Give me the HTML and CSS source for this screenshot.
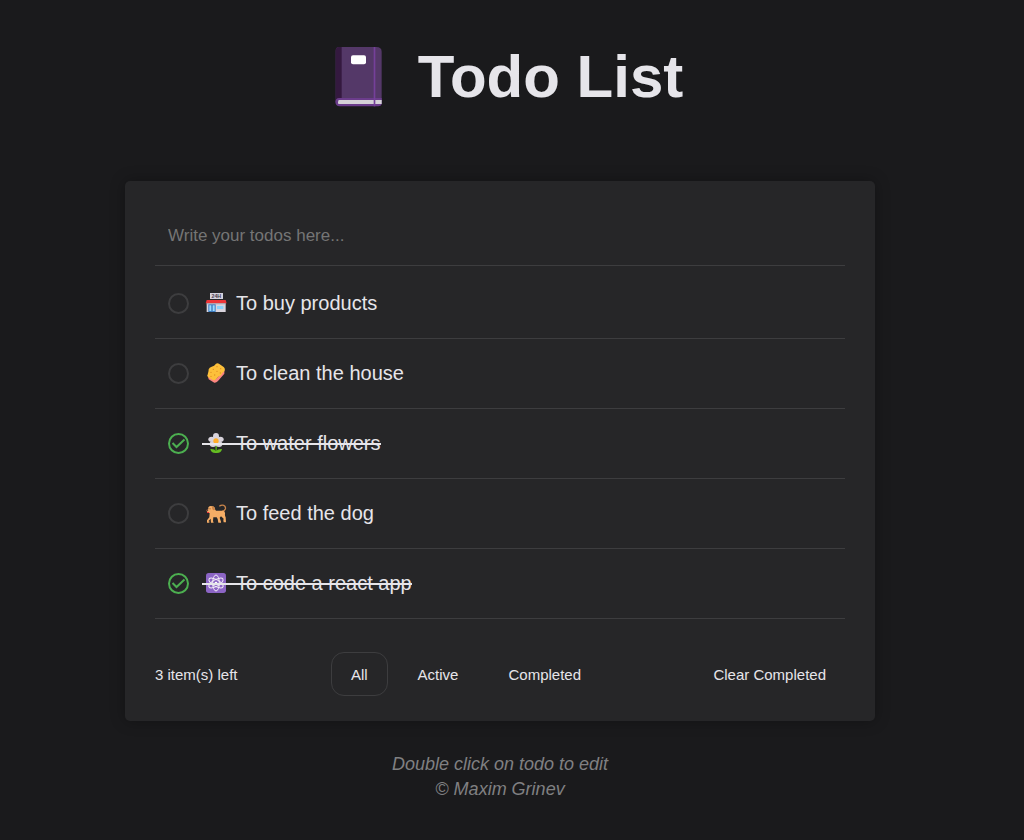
FILE: index.html
```html
<!DOCTYPE html>
<html lang="en">
<head>
<meta charset="utf-8">
<meta name="viewport" content="width=device-width, initial-scale=1">
<title>Todo List</title>
<link rel="stylesheet" href="styles.css">
</head>
<body class="page">
<header class="header">
  <h1 class="title">
    <svg class="title-icon" viewBox="0 0 249 192" aria-hidden="true">
      <path d="M66 6H178Q194 6 194 20V168H76V180H70Q56 180 56 166V18Q56 6 66 6Z" fill="#543868"/>
      <path d="M66 6H74V162H62L56 166V18Q56 6 66 6Z" fill="#34193f"/>
      <path d="M66 159H194V178Q192 184 184 184H68Q55 182 55 170Q56 160 66 159Z" fill="#6b3c8b"/>
      <path d="M65 165H194V177H65Q62 175 63 171Z" fill="#d5d2d8"/>
      <path d="M170 6H175V184H170Z" fill="#75409a"/>
      <rect x="102" y="31" width="45" height="27" rx="6" fill="#fff"/>
    </svg>
    <span>Todo List</span>
  </h1>
</header>

<main class="card">
  <form class="new-todo">
    <input class="new-input" type="text" placeholder="Write your todos here..." aria-label="New todo">
  </form>

  <ul class="list">
    <li class="item">
      <span class="check">
        <input class="check-input" type="checkbox" id="t1">
        <svg class="check-icon" viewBox="0 0 21 21" aria-hidden="true"><circle cx="10.500" cy="10.500" r="9.500"/><path d="M4.500 10L8.500 14L16.500 6.500"/></svg>
      </span>
      <label class="text" for="t1">
        <svg class="emoji" viewBox="0 0 84 66" aria-hidden="true">
          <rect x="24" y="3" width="39" height="18" fill="#d6d2de"/>
          <text class="sign" x="43" y="17" text-anchor="middle">24H</text>
          <path d="M14 24H71L74 34H11Z" fill="#ee3538"/>
          <rect x="14" y="34" width="57" height="26" fill="#d9d4dd"/>
          <rect x="14" y="34" width="57" height="3" fill="#b9a9b4"/>
          <rect x="19" y="37" width="22" height="23" fill="#3b7abf"/>
          <path d="M22 40H28V57H22ZM32 40H38V57H32Z" fill="#9bdcff"/>
          <rect x="45" y="42" width="19" height="9" fill="#8bd2fa"/>
        </svg>
        <span>To buy products</span>
      </label>
    </li>
    <li class="item">
      <span class="check">
        <input class="check-input" type="checkbox" id="t2">
        <svg class="check-icon" viewBox="0 0 21 21" aria-hidden="true"><circle cx="10.500" cy="10.500" r="9.500"/><path d="M4.500 10L8.500 14L16.500 6.500"/></svg>
      </span>
      <label class="text" for="t2">
        <svg class="emoji" viewBox="0 0 84 66" aria-hidden="true">
          <path d="M17 39L20 52L37 62Q42 63 48 57L67 35V23L45 48L36 54Z" fill="#fb8580"/>
          <path d="M42 5Q47 2 52 6L65 15Q71 20 67 28Q60 33 57 40Q48 43 42 52Q36 57 31 53L19 46Q14 42 18 34Q20 28 20 22Q22 16 29 14Q37 12 42 5Z" fill="#fdc03a"/>
          <g fill="#df8c23"><circle cx="45" cy="14" r="2"/><circle cx="56" cy="20" r="2"/><circle cx="34" cy="22" r="2"/><circle cx="45" cy="28" r="2"/><circle cx="27" cy="31" r="2"/><circle cx="55" cy="33" r="2"/><circle cx="38" cy="39" r="2"/><circle cx="27" cy="43" r="2"/></g>
        </svg>
        <span>To clean the house</span>
      </label>
    </li>
    <li class="item">
      <span class="check">
        <input class="check-input" type="checkbox" id="t3" checked>
        <svg class="check-icon" viewBox="0 0 21 21" aria-hidden="true"><circle cx="10.500" cy="10.500" r="9.500"/><path d="M4.500 10L8.500 14L16.500 6.500"/></svg>
      </span>
      <label class="text done" for="t3">
        <svg class="emoji" viewBox="0 0 84 66" aria-hidden="true">
          <path d="M40 35H45V60H40Z" fill="#4b9b16"/>
          <path d="M25 51Q38 50 42 58Q47 50 60 51Q58 63 45 63H40Q27 63 25 51Z" fill="#65bd22"/>
          <g fill="#d8d3dc"><ellipse cx="42" cy="13" rx="9" ry="10"/><ellipse cx="29" cy="22" rx="10" ry="8"/><ellipse cx="55" cy="22" rx="10" ry="8"/><ellipse cx="33" cy="36" rx="10" ry="9"/><ellipse cx="51" cy="36" rx="10" ry="9"/></g>
          <circle cx="42" cy="27" r="8" fill="#ffae2b"/>
        </svg>
        <span>To water flowers</span>
      </label>
    </li>
    <li class="item">
      <span class="check">
        <input class="check-input" type="checkbox" id="t4">
        <svg class="check-icon" viewBox="0 0 21 21" aria-hidden="true"><circle cx="10.500" cy="10.500" r="9.500"/><path d="M4.500 10L8.500 14L16.500 6.500"/></svg>
      </span>
      <label class="text" for="t4">
        <svg class="emoji" viewBox="0 0 84 66" aria-hidden="true">
          <path d="M52 13Q58 8 65 10Q72 13 70 21Q68 27 60 28" fill="none" stroke="#c9854b" stroke-width="4"/>
          <path d="M19 16Q24 10 31 13Q39 14 39 22L42 26H64Q70 28 69 36Q68 41 71 46L72 61H65L64 55L65 50L57 43L53 47L57 59V62H49L47 51L44 46H34L33 57L35 62H27L26 50L19 58H22V62H15V55L22 46L23 34L17 31L12 25L19 22Z" fill="#f5ad66"/>
          <path d="M30 13Q38 13 39 23L34 25Q29 21 30 13Z" fill="#cb8448"/>
          <path d="M12 23L17 22L19 26L14 27Z" fill="#532d2f"/>
          <path d="M15 30H21V33H15Z" fill="#ed3340"/>
          <circle cx="24" cy="20" r="1.500" fill="#532d2f"/>
        </svg>
        <span>To feed the dog</span>
      </label>
    </li>
    <li class="item">
      <span class="check">
        <input class="check-input" type="checkbox" id="t5" checked>
        <svg class="check-icon" viewBox="0 0 21 21" aria-hidden="true"><circle cx="10.500" cy="10.500" r="9.500"/><path d="M4.500 10L8.500 14L16.500 6.500"/></svg>
      </span>
      <label class="text done" for="t5">
        <svg class="emoji" viewBox="0 0 84 66" aria-hidden="true">
          <rect x="12" y="3" width="60" height="60" rx="8" fill="#8c65c5"/>
          <g fill="none" stroke="#f3edf8" stroke-width="3"><ellipse cx="42" cy="33" rx="10" ry="24"/><ellipse cx="42" cy="33" rx="10" ry="24" transform="rotate(60 42 33)"/><ellipse cx="42" cy="33" rx="10" ry="24" transform="rotate(120 42 33)"/></g>
          <circle cx="42" cy="33" r="4" fill="#fff"/>
        </svg>
        <span>To code a react app</span>
      </label>
    </li>
  </ul>

  <div class="toolbar">
    <span>3 item(s) left</span>
    <div class="filters">
      <button class="button filter active" type="button">All</button>
      <button class="button filter" type="button">Active</button>
      <button class="button filter" type="button">Completed</button>
    </div>
    <button class="button" type="button">Clear Completed</button>
  </div>
</main>

<footer class="footer">
  <p class="note">Double click on todo to edit</p>
  <p class="note">© Maxim Grinev</p>
</footer>
</body>
</html>
```
FILE: styles.css
```css
* {
  box-sizing: border-box;
}

.page {
  margin: 0;
  padding: 41px 24px 0 0;
  background: #1a1a1c;
  color: #e6e5ea;
  font-family: "Liberation Sans", Arial, sans-serif;
}

.title {
  display: flex;
  justify-content: center;
  align-items: center;
  gap: 18px;
  margin: 0 0 68px;
  font-size: 60px;
  line-height: 72px;
}

.title-icon {
  width: 83px;
  height: 64px;
}

.card {
  max-width: 750px;
  margin: 0 auto;
  padding: 30px 30px 25px;
  border-radius: 5px;
  background: #262628;
  box-shadow: 0 0 15px rgba(0, 0, 0, 0.3);
}

.new-todo {
  margin: 0 0 3px;
}

.new-input {
  display: block;
  width: 100%;
  padding: 11px 13px 15px;
  border: 0;
  border-bottom: 1px solid #3d3d3f;
  outline: 0;
  background: transparent;
  color: inherit;
  font-family: inherit;
  font-size: 17px;
  line-height: 28px;
  height: 55px;
}

.new-input::placeholder {
  color: #757575;
}

.list {
  margin: 0;
  padding: 0;
  list-style: none;
}

.item {
  display: flex;
  align-items: center;
  gap: 13px;
  height: 70px;
  padding: 0 13px;
  border-bottom: 1px solid #3d3d3f;
}

.check {
  display: grid;
}

.check-input,
.check-icon {
  grid-area: 1 / 1;
  width: 21px;
  height: 21px;
  margin: 0;
}

.check-input {
  appearance: none;
}

.check-icon {
  fill: none;
  stroke: #3d3d3f;
  stroke-width: 2;
  pointer-events: none;
}

.check-icon path {
  display: none;
}

.check-input:checked + .check-icon {
  stroke: #4caf50;
}

.check-input:checked + .check-icon path {
  display: inline;
}

.text {
  display: flex;
  align-items: center;
  gap: 6px;
  position: relative;
  padding-bottom: 1px;
  font-size: 20px;
  line-height: 24px;
}

.emoji {
  width: 28px;
  height: 22px;
}

.sign {
  font-size: 16px;
  font-weight: bold;
  fill: #49404f;
}

.done::after {
  content: "";
  position: absolute;
  top: 12px;
  left: 0;
  right: 0;
  height: 2px;
  background: #e6e5ea;
}

.toolbar {
  display: flex;
  justify-content: space-between;
  align-items: center;
  margin-top: 33px;
  font-size: 15px;
}

.filters {
  display: flex;
  gap: 10px;
}

.button {
  height: 44px;
  padding: 0 18px;
  border: 1px solid transparent;
  border-radius: 13px;
  background: transparent;
  color: inherit;
  font-family: inherit;
  font-size: 15px;
}

.filter {
  padding: 0 19px;
}

.active {
  border-color: #3d3d3f;
}

.footer {
  padding: 31px 0;
  color: #808082;
  font-size: 18px;
  font-style: italic;
  line-height: 25px;
  text-align: center;
}

.note {
  margin: 0;
}
```
